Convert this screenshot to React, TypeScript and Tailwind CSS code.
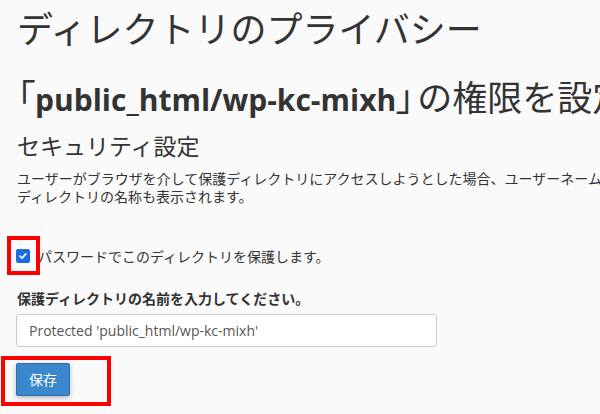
export default function App() {
  return (
    <div className="relative min-h-[414px] w-full overflow-hidden bg-[#fafafa] text-[#333] font-['Open_Sans','Noto_Sans_CJK_JP',sans-serif]">
      <div className="w-[1100px] pl-[17px]">
        {/* Page title */}
        <h1 className="pt-[8px] text-[36px] leading-[44px] font-normal">ディレクトリのプライバシー</h1>

        <h2 className="mt-[24px] whitespace-nowrap text-[36px] leading-[44px] font-normal">
          <span className="[font-feature-settings:'palt']">「</span>
          <span className="text-[30px] font-bold">public_html/wp-kc-mixh</span>
          <span className="[font-feature-settings:'palt']">」</span>
          <span className="ml-[3px] text-[35px]">の権限を設定</span>
        </h2>

        <h3 className="mt-[10px] text-[23px] leading-[28px] font-normal">セキュリティ設定</h3>
        <p className="mt-[10px] whitespace-nowrap text-[14px] leading-[18px]">
          ユーザーがブラウザを介して保護ディレクトリにアクセスしようとした場合、ユーザーネームとパスワードの入力を求めるプロンプトに
          <br />
          ディレクトリの名称も表示されます。
        </p>

        {/* Checkbox */}
        <label className="mt-[40px] flex h-[20px] items-center gap-[8px] text-[14px]">
          <span className="relative ml-[-1px] flex h-[14px] w-[14px] items-center justify-center rounded-[2px] bg-[#1a6fdc]">
            <svg viewBox="0 0 12 12" className="h-[10px] w-[10px]" fill="none" stroke="white" strokeWidth="2" strokeLinecap="round" strokeLinejoin="round">
              <path d="M2.5 6.2l2.3 2.3 4.7-5" />
            </svg>
            <span className="absolute left-[-9px] top-[-13px] h-[39px] w-[33px] border-[4px] border-[#ff0000]" />
          </span>
          <span>パスワードでこのディレクトリを保護します。</span>
        </label>

        {/* Directory name */}
        <div className="mt-[23px] text-[14px] leading-[20px] font-bold">保護ディレクトリの名前を入力してください。</div>
        <input
          type="text"
          defaultValue="Protected 'public_html/wp-kc-mixh'"
          className="mt-[5px] ml-[-1px] block h-[33px] w-[421px] rounded-[3px] border border-[#ccc] bg-white px-[12px] text-[14px] text-[#555] outline-none"
        />

        <div className="relative mt-[16px] ml-[-1px] w-[54px]">
          <button className="h-[33px] w-[54px] rounded-[2px] border border-[#2f6ead] bg-[#3a87cd] text-[14px] text-white shadow-[0_2px_5px_rgba(0,0,0,0.25)]">
            保存
          </button>
          <span className="pointer-events-none absolute left-[-15px] top-[-7px] h-[50px] w-[110px] border-[4px] border-[#ff0000]" />
        </div>
      </div>
    </div>
  );
}
